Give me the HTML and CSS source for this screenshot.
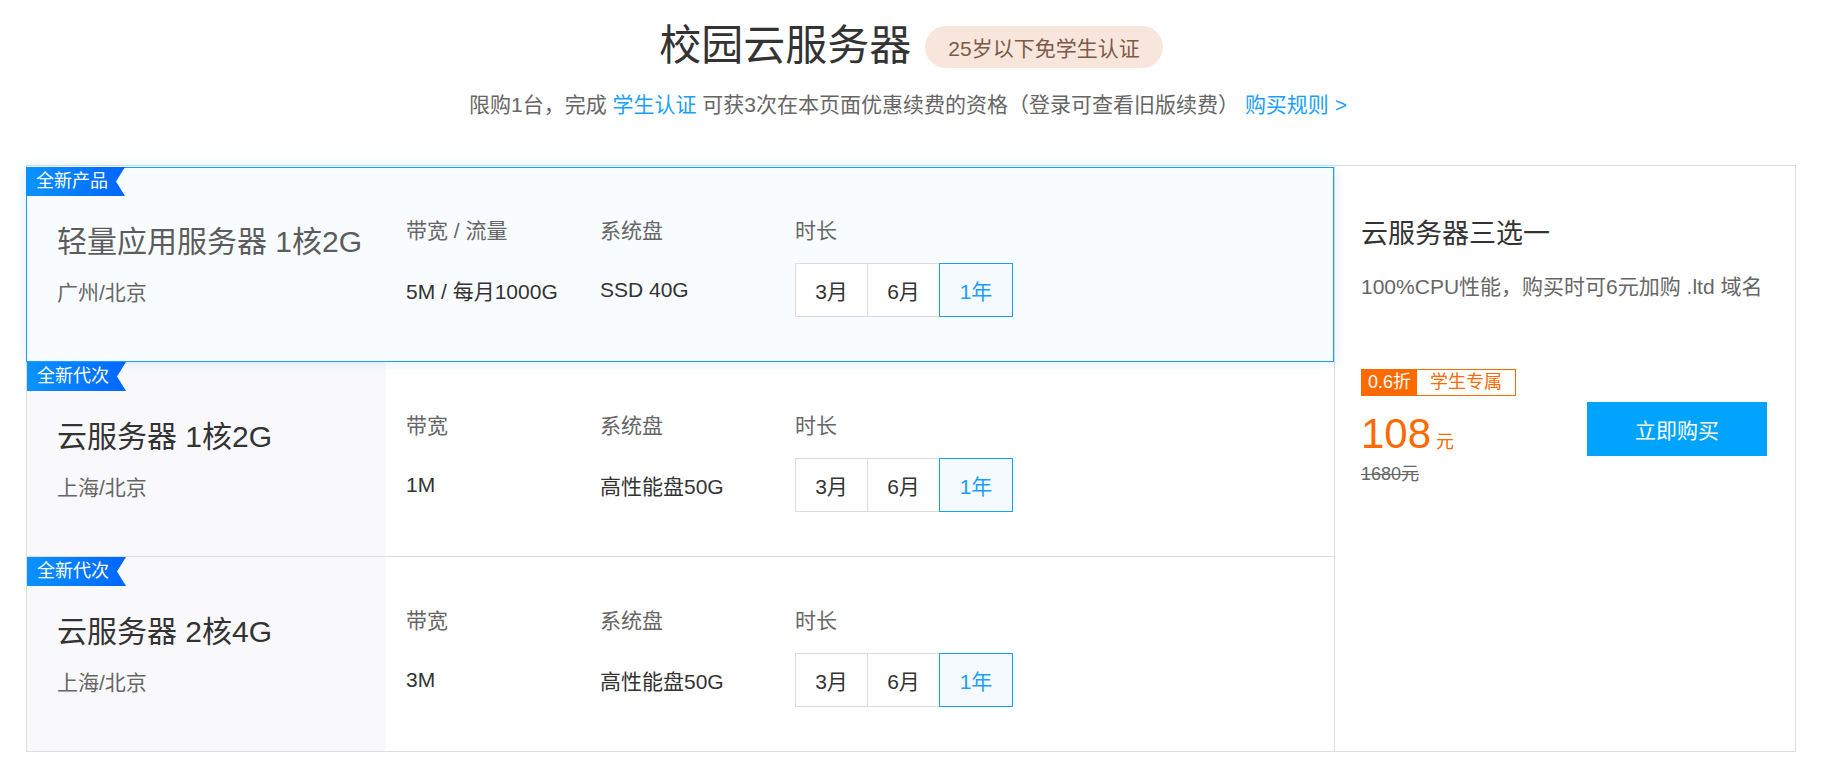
FILE: index.html
```html
<!DOCTYPE html>
<html lang="zh-CN">
<head>
<meta charset="utf-8">
<title>校园云服务器</title>
<link rel="stylesheet" href="styles.css">
</head>
<body>
<div class="page">
  <header class="hero">
    <div class="hero-title">
      <h1 class="title">校园云服务器</h1>
      <span class="age-badge">25岁以下免学生认证</span>
    </div>
    <p class="subtitle">限购1台，完成 <a class="link" href="#">学生认证</a> 可获3次在本页面优惠续费的资格（登录可查看旧版续费） <a class="link rules" href="#">购买规则 &gt;</a></p>
  </header>

  <section class="plans">
    <div class="list">
      <div class="row row-active">
        <span class="ribbon">全新产品</span>
        <div class="info">
          <div class="name">轻量应用服务器 1核2G</div>
          <div class="region">广州/北京</div>
        </div>
        <div class="specs">
          <div class="spec">
            <div class="label">带宽 / 流量</div>
            <div class="value">5M / 每月1000G</div>
          </div>
          <div class="spec">
            <div class="label">系统盘</div>
            <div class="value">SSD 40G</div>
          </div>
          <div class="spec">
            <div class="label">时长</div>
            <div class="durations">
              <span class="dur">3月</span><span class="dur">6月</span><span class="dur dur-on">1年</span>
            </div>
          </div>
        </div>
      </div>

      <div class="row">
        <span class="ribbon">全新代次</span>
        <div class="info">
          <div class="name">云服务器 1核2G</div>
          <div class="region">上海/北京</div>
        </div>
        <div class="specs">
          <div class="spec">
            <div class="label">带宽</div>
            <div class="value">1M</div>
          </div>
          <div class="spec">
            <div class="label">系统盘</div>
            <div class="value">高性能盘50G</div>
          </div>
          <div class="spec">
            <div class="label">时长</div>
            <div class="durations">
              <span class="dur">3月</span><span class="dur">6月</span><span class="dur dur-on">1年</span>
            </div>
          </div>
        </div>
      </div>

      <div class="row row-last">
        <span class="ribbon">全新代次</span>
        <div class="info">
          <div class="name">云服务器 2核4G</div>
          <div class="region">上海/北京</div>
        </div>
        <div class="specs">
          <div class="spec">
            <div class="label">带宽</div>
            <div class="value">3M</div>
          </div>
          <div class="spec">
            <div class="label">系统盘</div>
            <div class="value">高性能盘50G</div>
          </div>
          <div class="spec">
            <div class="label">时长</div>
            <div class="durations">
              <span class="dur">3月</span><span class="dur">6月</span><span class="dur dur-on">1年</span>
            </div>
          </div>
        </div>
      </div>
    </div>

    <aside class="side">
      <div class="side-title">云服务器三选一</div>
      <div class="side-desc">100%CPU性能，购买时可6元加购 .ltd 域名</div>
      <div class="buy">
        <div class="price-block">
          <div class="tag"><span class="tag-off">0.6折</span><span class="tag-txt">学生专属</span></div>
          <div class="price"><span class="num">108</span><span class="unit">元</span></div>
          <div class="orig">1680元</div>
        </div>
        <a class="buy-btn" href="#">立即购买</a>
      </div>
    </aside>
  </section>
</div>
</body>
</html>
```
FILE: styles.css
```css
* { box-sizing: border-box; }
html, body { margin: 0; padding: 0; background: #fff; }
body {
  font-family: "Liberation Sans", "Noto Sans CJK SC", sans-serif;
  color: #333;
}
a { text-decoration: none; }

.page {
  width: 1770px;
  margin-left: 26px;
}

/* header */
.hero { padding-top: 24px; }
.hero-title {
  display: flex;
  justify-content: center;
  align-items: center;
  gap: 14px;
  height: 44px;
}
.title {
  margin: 0;
  font-size: 42px;
  line-height: 42px;
  font-weight: 400;
  color: #333;
}
.age-badge {
  display: inline-flex;
  align-items: center;
  height: 42px;
  padding: 0 23px;
  border-radius: 21px;
  background: #f8e6dc;
  color: #7b5a48;
  font-size: 21px;
  margin-top: 2px;
}
.subtitle {
  margin: 22px 0 0;
  padding-right: 6px;
  text-align: center;
  font-size: 21px;
  line-height: 30px;
  color: #666;
}
.link { color: #1a9fff; }

/* plans */
.plans {
  display: flex;
  margin-top: 45px;
  border: 1px solid #dedede;
}
.list {
  flex: 0 0 1307px;
  display: flex;
  flex-direction: column;
}
.row {
  position: relative;
  display: flex;
  height: 195px;
  border-bottom: 1px solid #dedede;
}
.row-last { border-bottom: 0; height: 194px; }
.row-active {
  margin: 1px 0 0 -1px;
  height: 195px;
  border: 1px solid #14a0ff;
  background: #f8fcff;
  box-shadow: 0 0 12px rgba(0, 150, 255, 0.16);
  z-index: 1;
}

.ribbon {
  position: absolute;
  left: 0;
  top: 0;
  width: 99px;
  height: 29px;
  padding-left: 10px;
  font-size: 18px;
  line-height: 29px;
  color: #fff;
  background: linear-gradient(90deg, #0a93ff, #0066ff);
  clip-path: polygon(0 0, 100% 0, calc(100% - 9px) 50%, 100% 100%, 0 100%);
}
.row-active .ribbon { left: -1px; top: -1px; }

.info {
  flex: 0 0 359px;
  padding: 60px 0 0 30px;
  background: #f9f9fb;
}
.row-active .info { flex-basis: 359px; padding-top: 59px; background: transparent; }
.name {
  font-size: 30px;
  line-height: 30px;
  color: #333;
}
.row-active .name { color: #5c5c5c; }
.region {
  margin-top: 25px;
  font-size: 21px;
  line-height: 21px;
  color: #666;
}

.specs {
  display: flex;
  padding: 53px 0 0 20px;
}
.row-active .specs { padding-top: 52px; }
.spec { flex: 0 0 194px; }
.spec + .spec { flex-basis: 195px; }
.label {
  font-size: 21px;
  line-height: 21px;
  color: #666;
  white-space: nowrap;
}
.value {
  margin-top: 22px;
  height: 54px;
  display: flex;
  align-items: center;
  font-size: 21px;
  color: #333;
  white-space: nowrap;
}
.durations {
  margin-top: 22px;
  display: flex;
}
.dur {
  position: relative;
  flex: 0 0 73px;
  display: flex;
  align-items: center;
  justify-content: center;
  height: 54px;
  border: 1px solid #dcdcdc;
  background: #fff;
  font-size: 21px;
  color: #333;
}
.dur + .dur { margin-left: -1px; }
.dur-on {
  z-index: 1;
  flex-basis: 74px;
  border-color: #14a0ff;
  background: #f4faff;
  color: #1a9fff;
}

/* side panel */
.side {
  flex: 1;
  border-left: 1px solid #dedede;
  padding: 55px 28px 0 26px;
  background: #fff;
}
.side-title {
  font-size: 27px;
  line-height: 27px;
  color: #333;
}
.side-desc {
  margin-top: 28px;
  font-size: 21px;
  line-height: 21px;
  color: #666;
}
.buy {
  margin-top: 72px;
  display: flex;
  justify-content: space-between;
  align-items: flex-start;
}
.tag {
  display: inline-flex;
  height: 27px;
  border: 1px solid #ff6a00;
  font-size: 18px;
  line-height: 25px;
}
.tag-off {
  padding: 0 6px;
  background: #ff6a00;
  color: #fff;
}
.tag-txt {
  padding: 0 13px;
  color: #ff6a00;
}
.price {
  margin-top: 16px;
  height: 44px;
  line-height: 44px;
  color: #ff6a00;
}
.num { font-size: 42px; }
.unit { font-size: 18px; margin-left: 5px; }
.orig {
  margin-top: 8px;
  font-size: 18px;
  line-height: 20px;
  color: #666;
  text-decoration: line-through;
}
.buy-btn {
  margin-top: 33px;
  width: 180px;
  height: 54px;
  display: flex;
  align-items: center;
  justify-content: center;
  background: #00a4ff;
  color: #fff;
  font-size: 21px;
}
```
